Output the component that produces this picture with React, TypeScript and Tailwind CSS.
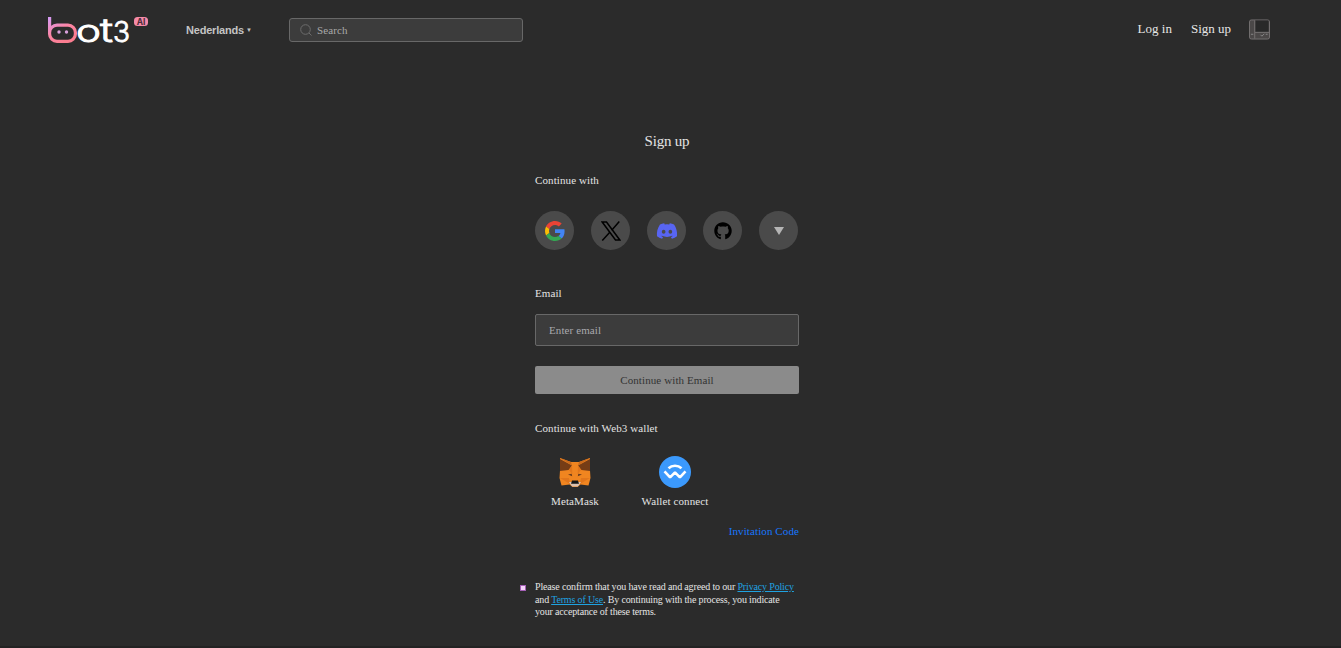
import type { ReactNode } from 'react'
import { FaDiscord, FaGithub } from 'react-icons/fa'

function Logo() {
  return (
    <svg className="h-[30px] w-[104px] overflow-visible" viewBox="0 0 104 30" fill="none">
      <defs>
        <linearGradient id="logo" x1="0" y1="0" x2="0.6" y2="1">
          <stop offset="0" stopColor="#d59bf5" />
          <stop offset="0.55" stopColor="#fb86a6" />
          <stop offset="1" stopColor="#fb7d90" />
        </linearGradient>
      </defs>
      <path
        d="M3.6 2v17a7.400 7.400 0 0 0 7.400 7.400h11a7.400 7.400 0 0 0 7.400-7.400v-1.500a7.400 7.400 0 0 0-7.400-7.400H11a7.400 7.400 0 0 0-7.400 7.400"
        stroke="url(#logo)"
        strokeWidth="3.2"
      />
      <circle cx="13" cy="17" r="1.700" fill="#d9a0dc" />
      <circle cx="20.500" cy="17" r="1.700" fill="#d9a0dc" />
      <g fill="#fff" stroke="#fff" className="font-['Inter',sans-serif] font-light">
        <text
          x="30"
          y="27"
          textLength="25"
          lengthAdjust="spacingAndGlyphs"
          strokeWidth="0.9"
          className="text-[31px]"
        >
          o
        </text>
        <text
          x="54"
          y="27"
          textLength="13"
          lengthAdjust="spacingAndGlyphs"
          strokeWidth="0.9"
          className="text-[33px]"
        >
          t
        </text>
        <text
          x="67"
          y="27"
          textLength="17"
          lengthAdjust="spacingAndGlyphs"
          strokeWidth="0.9"
          className="text-[28px]"
        >
          3
        </text>
      </g>
      <rect x="88" y="2" width="14" height="9" rx="3.500" fill="#f58aa8" />
      <text
        x="95"
        y="9.600"
        textAnchor="middle"
        fill="#4b2b38"
        className="font-['Inter',sans-serif] text-[8.5px] font-bold"
      >
        AI
      </text>
    </svg>
  )
}

function GoogleIcon() {
  return (
    <svg className="size-5" viewBox="0 0 48 48">
      <path
        fill="#EA4335"
        d="M24 9.5c3.54 0 6.71 1.22 9.21 3.6l6.85-6.85C35.9 2.38 30.47 0 24 0 14.62 0 6.51 5.38 2.56 13.22l7.98 6.19C12.43 13.72 17.74 9.5 24 9.5z"
      />
      <path
        fill="#4285F4"
        d="M46.98 24.55c0-1.57-.15-3.09-.38-4.55H24v9.02h12.94c-.58 2.96-2.26 5.48-4.78 7.18l7.73 6c4.51-4.18 7.09-10.36 7.09-17.65z"
      />
      <path
        fill="#FBBC05"
        d="M10.53 28.59c-.48-1.45-.76-2.99-.76-4.59s.27-3.14.76-4.59l-7.98-6.19C.92 16.46 0 20.12 0 24c0 3.88.92 7.54 2.56 10.78l7.97-6.19z"
      />
      <path
        fill="#34A853"
        d="M24 48c6.48 0 11.93-2.13 15.89-5.81l-7.73-6c-2.15 1.45-4.92 2.3-8.16 2.3-6.26 0-11.57-4.22-13.47-9.91l-7.98 6.19C6.51 42.62 14.62 48 24 48z"
      />
    </svg>
  )
}

function XIcon() {
  return (
    <svg className="size-5" viewBox="0 0 20 20" fill="none" stroke="currentColor">
      <path d="M1.200 1h4.300l13.300 18h-4.300z" strokeWidth="1.500" />
      <path d="M18.300.5l-7.600 8.700M8.800 11.300L1.300 19.500" strokeWidth="1.500" />
    </svg>
  )
}

function MetaMaskIcon() {
  return (
    <svg className="h-[30px] w-8" viewBox="0 0 32 30">
      <path
        fill="#f08520"
        d="M1 1l11 4h8l11-4v12.500l.5 7.500-2 7.500-8-1-3 2.500h-5l-3-2.500-8 1L.5 21l.5-7.500z"
      />
      <path fill="#763d16" d="M1 2l12 6.500-3.500 4.500L1 14z M31 2L19 8.500l3.500 4.500L31 14z" />
      <path fill="#c96a1c" d="M1 1l11 4 1 3.500z M31 1L20 5l-1 3.500z" />
      <path fill="#e2761b" d="M10 13l3-4.500.3 8.500z M22 13l-3-4.500-.3 8.500z M1 21h9l1 6z M31 21h-9l-1 6z" />
      <path fill="#6b3c1c" d="M9 17.500l3.700-.700.500 2.500z M23 17.500l-3.700-.700-.500 2.500z" />
      <path fill="#d7c1b3" d="M10 25h12l-3 4.500h-6z" />
      <path fill="#161616" d="M13 23.500h6l1 3.300h-8z" />
    </svg>
  )
}

function WalletConnectIcon() {
  return (
    <svg className="size-8" viewBox="0 0 32 32" fill="none">
      <circle cx="16" cy="16" r="16" fill="#3b99fc" />
      <g stroke="#fff" strokeWidth="2.6" strokeLinejoin="bevel">
        <path d="M9.500 12.300c3.600-3.500 9.400-3.500 13 0" />
        <path d="M5.500 15.300l5.600 6 4.900-5 4.900 5 5.600-6" />
      </g>
    </svg>
  )
}

function SocialButton({ label, children }: { label: string; children: ReactNode }) {
  return (
    <button
      aria-label={label}
      className="flex size-[39px] items-center justify-center rounded-full bg-[#4a4a4a] text-black"
    >
      {children}
    </button>
  )
}

function Header() {
  return (
    <header className="flex h-[60px] items-center pr-[71px] pl-[46px]">
      <Logo />
      <button className="ml-9 flex w-[66px] items-center gap-0.5 font-['Liberation_Sans',sans-serif] text-[11px] font-bold tracking-[-0.2px] text-[#c4c4c4]">
        Nederlands
        <span className="text-[6px]">▼</span>
      </button>
      <div className="ml-[37px] flex h-6 w-[234px] items-center gap-[5px] rounded-[3px] border border-[#686868] bg-[#3c3c3c] pl-2.5">
        <svg className="size-3" viewBox="0 0 12 12" fill="none" stroke="#6c6c6c">
          <circle cx="5.500" cy="5.500" r="4.800" />
          <path d="M9 9l2.500 2.500" />
        </svg>
        <span className="text-[11px] tracking-[0.1px] text-[#a9a9a9]">Search</span>
      </div>
      <nav className="ml-auto flex items-center text-[13px] text-[#e6e6e6]">
        <a href="#" className="-mt-0.5">
          Log in
        </a>
        <a href="#" className="-mt-0.5 ml-[19px]">
          Sign up
        </a>
        <svg className="-mt-px ml-[18px] h-[21px] w-[21px]" viewBox="0 0 22 21" fill="none">
          <rect x="0.500" y="0.500" width="21" height="20" rx="2" fill="#4b4848" stroke="#777273" />
          <path d="M6.500 1h14v12h-14z" fill="#292929" />
          <path d="M6 1v12.500h15M6 13.500V20" stroke="#777273" />
          <path d="M2 15.500h2.500M12 16l1.500 1.500L16 15M17.500 15.500h2" stroke="#888" />
        </svg>
      </nav>
    </header>
  )
}

export default function App() {
  return (
    <div className="h-[648px] overflow-hidden border-b-2 border-[#232323] bg-[#2b2b2b] font-['Liberation_Serif',serif] text-[#e4e4e4]">
      <Header />

      <main className="ml-[535px] flex w-[264px] flex-col pt-[71px] text-[11px] leading-4 tracking-[0.1px]">
        <h1 className="text-center text-[15px] leading-5 tracking-[-0.2px]">Sign up</h1>
        <p className="mt-[21px]">Continue with</p>

        {/* Social logins */}
        <div className="mt-[23px] flex gap-[17px]">
          <SocialButton label="Google">
            <GoogleIcon />
          </SocialButton>
          <SocialButton label="X">
            <XIcon />
          </SocialButton>
          <SocialButton label="Discord">
            <FaDiscord className="size-[22px] text-[#5865f2]" />
          </SocialButton>
          <SocialButton label="GitHub">
            <FaGithub className="size-[18px]" />
          </SocialButton>
          <SocialButton label="More">
            <svg className="h-2 w-2.5 fill-[#b5b5b5]" viewBox="0 0 10 8">
              <path d="M0 0h10L5 8z" />
            </svg>
          </SocialButton>
        </div>

        {/* Email */}
        <label className="mt-[35px]">Email</label>
        <div className="mt-[13px] flex h-8 items-center rounded-[2px] border border-[#686868] bg-[#3c3c3c] pl-[13px] text-[#a9a9ad]">
          Enter email
        </div>
        <button className="mt-5 h-7 rounded-[2px] bg-[#8b8b8b] text-[#333]">Continue with Email</button>

        {/* Wallets */}
        <p className="mt-[26px]">Continue with Web3 wallet</p>
        <div className="mt-5 flex">
          <div className="flex w-20 flex-col items-center">
            <div className="flex h-8 items-center">
              <MetaMaskIcon />
            </div>
            <span className="mt-[5px]">MetaMask</span>
          </div>
          <div className="ml-5 flex w-20 flex-col items-center">
            <WalletConnectIcon />
            <span className="mt-[5px]">Wallet connect</span>
          </div>
        </div>
        <a href="#" className="mt-3.5 self-end text-[#1677ff]">
          Invitation Code
        </a>

        {/* Terms */}
        <div className="mt-[42px] -ml-[15px] flex text-[10px] leading-[12.5px] tracking-[-0.155px]">
          <span className="mt-1 mr-[9px] size-1.5 shrink-0 border border-[#a45fb5] bg-[#f5d5fa]" />
          <p className="whitespace-nowrap">
            Please confirm that you have read and agreed to our{' '}
            <a href="#" className="text-[#1fa2e0] underline">
              Privacy Policy
            </a>
            <br />
            and{' '}
            <a href="#" className="text-[#1fa2e0] underline">
              Terms of Use
            </a>
            . By continuing with the process, you indicate
            <br />
            your acceptance of these terms.
          </p>
        </div>
      </main>
    </div>
  )
}
